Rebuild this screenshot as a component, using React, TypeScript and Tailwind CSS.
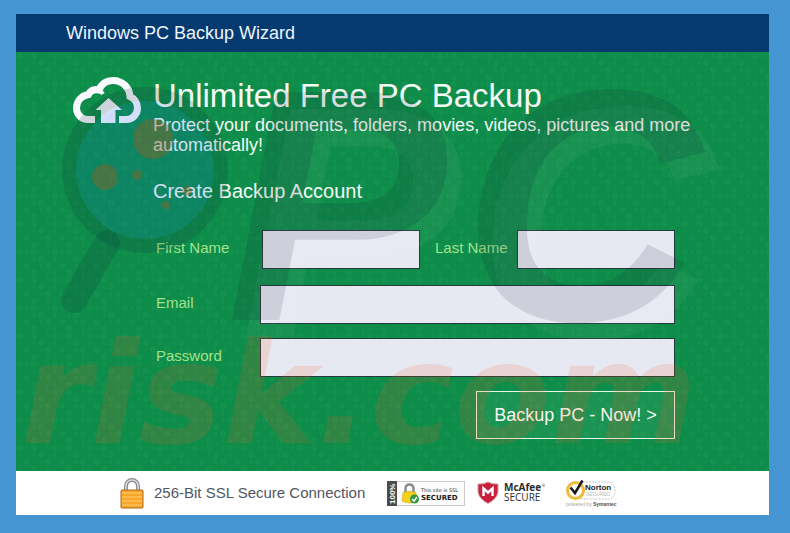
import { useState } from "react";

interface FieldProps {
	id: string;
	label: string;
	type?: string;
	labelClass: string;
	value: string;
	onChange: (value: string) => void;
}

function Field({ id, label, type = "text", labelClass, value, onChange }: FieldProps) {
	return (
		<div className="flex items-center">
			<label htmlFor={id} className={`shrink-0 pb-1 text-[15px] leading-5 text-[#a3e28c] ${labelClass}`}>
				{label}
			</label>
			<input
				id={id}
				type={type}
				value={value}
				onChange={(e) => onChange(e.target.value)}
				className="h-[39px] w-full min-w-0 flex-1 border border-[#243a3c] bg-[#e7e9f2] px-3 text-base text-gray-800 focus:outline-none"
			/>
		</div>
	);
}

function CloudUpload() {
	return (
		<svg viewBox="0 0 68 46" className="mt-[25px] h-[46px] w-[68px] shrink-0" aria-hidden="true">
			<path
				d="M22 42.500H15C8.500 42.500 3.500 37.500 3.500 31C3.500 24 8.500 18.500 15.500 17.500C17.500 13.500 21.500 12 26 13C28.500 7 33.500 3.500 40 3.500C49.500 3.500 56.500 10.500 57 19.500C61.500 21.500 64.500 26 64.500 31C64.500 37.500 59.500 42.500 53 42.500H46"
				fill="none"
				stroke="#f8fafd"
				strokeWidth="7"
			/>
			<path d="M25 13Q28 14 30 17" fill="none" stroke="#f8fafd" strokeWidth="4" />
			<path d="M35.500 21L49 33H42.500V46H28V33H22.500Z" fill="#f4f6fb" />
		</svg>
	);
}

/* faint dotted texture behind the form */
function Texture() {
	return (
		<svg className="pointer-events-none absolute inset-0 h-full w-full" aria-hidden="true">
			<defs>
				<pattern id="dots" width="35" height="28" patternUnits="userSpaceOnUse">
					<g fill="none" stroke="#5cd08c" strokeOpacity="0.08" strokeWidth="1.500">
						<circle cx="4" cy="4" r="2" />
						<circle cx="18" cy="4" r="2" />
						<circle cx="25" cy="11" r="2" />
						<circle cx="11" cy="18" r="2" />
						<circle cx="32" cy="18" r="2" />
						<circle cx="18" cy="25" r="2" />
						<path d="M11 2v4M32 2v4M4 9v4M18 9v4M25 16v4M4 23v4M32 23v4" />
					</g>
				</pattern>
			</defs>
			<rect width="100%" height="100%" fill="url(#dots)" />
		</svg>
	);
}

function Watermark() {
	return (
		<svg
			viewBox="0 0 753 419"
			className="pointer-events-none absolute inset-0 h-full w-full overflow-visible font-bold italic select-none"
			aria-hidden="true"
		>
			<circle cx="129" cy="118" r="69" fill="#1060e0" fillOpacity="0.16" />
			<circle cx="129" cy="118" r="76" fill="none" stroke="#0c2a3c" strokeOpacity="0.17" strokeWidth="14" />
			<path d="M91 191L58 248" stroke="#0c2a3c" strokeOpacity="0.17" strokeWidth="26" strokeLinecap="round" />
			<g fill="#b05a10" fillOpacity="0.35">
				<circle cx="89" cy="125" r="13" />
				<circle cx="137" cy="87" r="20" />
				<circle cx="121" cy="123" r="5" />
				<circle cx="150" cy="153" r="4" />
				<circle cx="171" cy="139" r="5" />
			</g>
			<g
				fill="#141428"
				fillOpacity="0.12"
				fontSize="331"
				className="font-['Liberation_Sans',sans-serif] [filter:drop-shadow(14px_17px_0_rgb(255_255_255/0.35))]"
			>
				<text x="210" y="268">P</text>
				<text x="446" y="268">C</text>
			</g>
			<text x="5" y="391" fill="#ff5a20" fillOpacity="0.15" fontSize="141" className="font-['DejaVu_Sans',sans-serif]">
				risk.com
			</text>
		</svg>
	);
}

function Padlock() {
	return (
		<svg viewBox="0 0 24 31" className="h-[31px] w-6 shrink-0" aria-hidden="true">
			<path d="M6 14V8.500C6 4.500 8.500 2 12 2S18 4.500 18 8.500V14" fill="none" stroke="#8b8d92" strokeWidth="4" />
			<path d="M6 14V8.500C6 4.500 8.500 2 12 2S18 4.500 18 8.500V14" fill="none" stroke="#dcdde0" strokeWidth="1.500" />
			<rect x="1" y="12" width="22" height="18" rx="1" fill="#f7a62a" stroke="#a86d1c" />
			<path d="M2 15h20M2 19h20M2 23h20M2 27h20" stroke="#ffc055" strokeWidth="1.500" />
		</svg>
	);
}

function SslBadge() {
	return (
		<svg viewBox="0 0 78 25" className="h-[25px] w-[78px] shrink-0 font-['Liberation_Sans',sans-serif]" role="img" aria-label="This site is SSL secured">
			<rect x="0.500" y="0.500" width="77" height="24" fill="#fcfcfc" stroke="#c9c9c9" />
			<rect width="10" height="25" fill="#4b4b4b" />
			<text x="-23" y="8" transform="rotate(-90)" fontSize="8" fontWeight="bold" fill="#ffffff">100%</text>
			<path d="M18.500 12V8C18.500 5 20 3.500 22.500 3.500S26.500 5 26.500 8V12" fill="none" stroke="#8a8c90" strokeWidth="2.500" />
			<path d="M16 11.500Q22.500 9 29 11.500L30.500 20Q22.500 24 15 20Z" fill="#f4cf1c" stroke="#c79d10" strokeWidth="0.500" />
			<circle cx="27.500" cy="18" r="4.500" fill="#2c9a3c" />
			<path d="M25 18L27 20L30 16" fill="none" stroke="#ffffff" strokeWidth="1.500" />
			<text x="34" y="11" fontSize="5" fill="#333333" className="font-['DejaVu_Sans',sans-serif]">This site is SSL</text>
			<text x="34" y="19" fontSize="7" fontWeight="bold" fill="#1c1c1c" className="font-['DejaVu_Sans',sans-serif]">SECURED</text>
		</svg>
	);
}

function McAfeeBadge() {
	return (
		<svg viewBox="0 0 68 24" className="h-6 w-[68px] shrink-0 font-['Open_Sans',sans-serif]" role="img" aria-label="McAfee Secure">
			<path d="M1 3Q7 3.500 11 1Q15 3.500 21 3V11Q20 18 11 22.500Q2 18 1 11Z" fill="#c71f3c" stroke="#d8a0a8" />
			<path d="M6.500 15V7.500L11 11.500L15.500 7.500V15" fill="none" stroke="#ffffff" strokeWidth="2.500" />
			<text x="27" y="10" fontSize="10" fontWeight="bold" fill="#2c2c2c">McAfee</text>
			<text x="65" y="6" fontSize="4" fill="#2c2c2c">®</text>
			<text x="27" y="20" fontSize="10" fill="#2c2c2c">SECURE</text>
		</svg>
	);
}

function NortonBadge() {
	return (
		<svg viewBox="0 0 52 30" className="h-[30px] w-[52px] shrink-0 font-['Liberation_Sans',sans-serif]" role="img" aria-label="Norton Secured, powered by Symantec">
			<path d="M15 4H44Q50 5 50 12.500T44 21H15" fill="#ffffff" stroke="#c8c8c8" strokeDasharray="2 1" />
			<circle cx="10.500" cy="12.500" r="8" fill="#ffffff" stroke="#eebc3a" strokeWidth="3" />
			<path d="M5.500 9.500L10 15L17.500 2.500" fill="none" stroke="#181818" strokeWidth="2.500" />
			<text x="20" y="12" fontSize="8" fontWeight="bold" fill="#252525">Norton</text>
			<text x="21" y="18" fontSize="5" fill="#bdbdbd">SECURED</text>
			<text x="1" y="28" fontSize="5" fill="#a5a5a5">powered by</text>
			<text x="28" y="28" fontSize="5" fontWeight="bold" fill="#555555">Symantec</text>
		</svg>
	);
}

export default function App() {
	const [firstName, setFirstName] = useState("");
	const [lastName, setLastName] = useState("");
	const [email, setEmail] = useState("");
	const [password, setPassword] = useState("");

	return (
		<div className="min-h-screen bg-[#4595d3] pt-[14px] pr-[21px] pb-[18px] pl-4 font-['Liberation_Sans',sans-serif]">
			{/* Title bar */}
			<header className="bg-[#053a70] py-[7px] pl-[50px] text-lg leading-6 text-[#eef4fb]">
				Windows PC Backup Wizard
			</header>

			{/* Form panel */}
			<main className="relative bg-[#0e8d4a] pb-8 pl-[57px]">
				<Texture />
				<div className="relative flex gap-3 pr-[70px]">
					<CloudUpload />
					<div className="min-w-0 flex-1 pt-6 text-[#f4faf6]">
						<h1 className="text-[33px] leading-[39px]">Unlimited Free PC Backup</h1>
						<p className="text-lg leading-5">
							Protect your documents, folders, movies, videos, pictures and more automatically!
						</p>
						<h2 className="mt-6 text-xl leading-6">Create Backup Account</h2>
					</div>
				</div>

				<form onSubmit={(e) => e.preventDefault()} className="relative mt-[27px] mr-[94px] ml-[83px] flex flex-col gap-[14px]">
					<div className="grid grid-cols-[264fr_240fr] gap-[15px] pb-[2px]">
						<Field id="first" label="First Name" labelClass="w-[106px]" value={firstName} onChange={setFirstName} />
						<Field id="last" label="Last Name" labelClass="w-[82px]" value={lastName} onChange={setLastName} />
					</div>
					<Field id="email" label="Email" type="email" labelClass="w-[104px]" value={email} onChange={setEmail} />
					<Field id="password" label="Password" type="password" labelClass="w-[104px]" value={password} onChange={setPassword} />
					<button
						type="submit"
						className="h-12 w-[199px] self-end border border-[#e4f6e6] bg-white/5 text-lg text-[#f8fcf5]"
					>
						Backup PC - Now! &gt;
					</button>
				</form>
				<Watermark />
			</main>

			{/* Trust badges */}
			<footer className="relative flex h-11 items-center bg-white pl-[104px]">
				<Padlock />
				<span className="ml-[10px] text-[15px] text-[#505663]">256-Bit SSL Secure Connection</span>
				<div className="ml-[22px] flex items-center gap-3">
					<SslBadge />
					<McAfeeBadge />
					<div className="pl-2">
						<NortonBadge />
					</div>
				</div>
			</footer>
		</div>
	);
}
